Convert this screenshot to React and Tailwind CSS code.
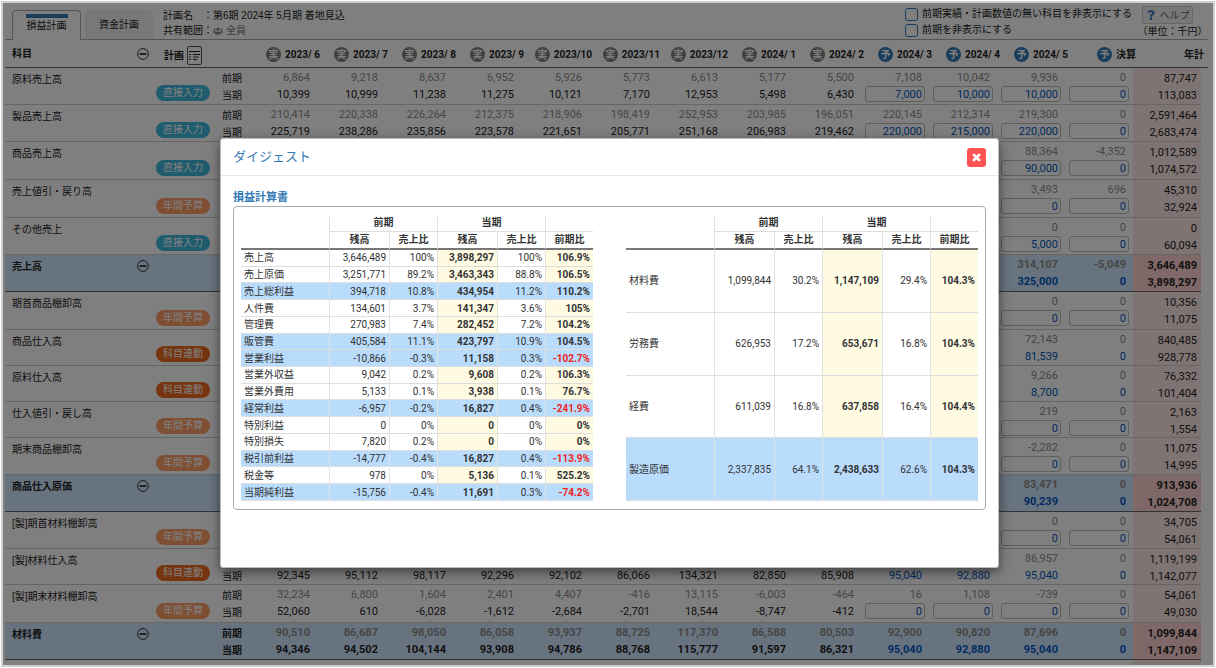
import React from "react";
import { FaUsers, FaQuestion } from "react-icons/fa";

const months = [
  ["実", "2023/ 6"],
  ["実", "2023/ 7"],
  ["実", "2023/ 8"],
  ["実", "2023/ 9"],
  ["実", "2023/10"],
  ["実", "2023/11"],
  ["実", "2023/12"],
  ["実", "2024/ 1"],
  ["実", "2024/ 2"],
  ["予", "2024/ 3"],
  ["予", "2024/ 4"],
  ["予", "2024/ 5"],
  ["予", "決算"],
];

const blank = (...tail) => [...Array(11).fill(""), ...tail];

const SHORT = "h-[36px]";
const MID = "h-[37px]";
const TALL = "h-[38px]";

const accounts = [
  {
    name: "原料売上高", kind: "direct", h: MID,
    prev: ["6,864", "9,218", "8,637", "6,952", "5,926", "5,773", "6,613", "5,177", "5,500", "7,108", "10,042", "9,936", "0"],
    cur: ["10,399", "10,999", "11,238", "11,275", "10,121", "7,170", "12,953", "5,498", "6,430", "7,000", "10,000", "10,000", "0"],
    sum: ["87,747", "113,083"],
  },
  {
    name: "製品売上高", kind: "direct", h: MID,
    prev: ["210,414", "220,338", "226,264", "212,375", "218,906", "198,419", "252,953", "203,985", "196,051", "220,145", "212,314", "219,300", "0"],
    cur: ["225,719", "238,286", "235,856", "223,578", "221,651", "205,771", "251,168", "206,983", "219,462", "220,000", "215,000", "220,000", "0"],
    sum: ["2,591,464", "2,683,474"],
  },
  { name: "商品売上高", kind: "direct", h: TALL, prev: blank("88,364", "-4,352"), cur: blank("90,000", "0"), sum: ["1,012,589", "1,074,572"] },
  { name: "売上値引・戻り高", kind: "yearly", h: TALL, prev: blank("3,493", "696"), cur: blank("0", "0"), sum: ["45,310", "32,924"] },
  { name: "その他売上", kind: "direct", h: MID, prev: blank("0", "0"), cur: blank("5,000", "0"), sum: ["0", "60,094"] },
  { name: "売上高", kind: "total", h: MID, prev: blank("314,107", "-5,049"), cur: blank("325,000", "0"), sum: ["3,646,489", "3,898,297"] },
  { name: "期首商品棚卸高", kind: "yearly", h: TALL, prev: blank("0", "0"), cur: blank("0", "0"), sum: ["10,356", "11,075"] },
  { name: "商品仕入高", kind: "linked", h: SHORT, prev: blank("72,143", "0"), cur: blank("81,539", "0"), sum: ["840,485", "928,778"] },
  { name: "原料仕入高", kind: "linked", h: SHORT, prev: blank("9,266", "0"), cur: blank("8,700", "0"), sum: ["76,332", "101,404"] },
  { name: "仕入値引・戻し高", kind: "yearly", h: SHORT, prev: blank("219", "0"), cur: blank("0", "0"), sum: ["2,163", "1,554"] },
  { name: "期末商品棚卸高", kind: "yearly", h: MID, prev: blank("-2,282", "0"), cur: blank("0", "0"), sum: ["11,075", "14,995"] },
  { name: "商品仕入原価", kind: "total", h: MID, prev: blank("83,471", "0"), cur: blank("90,239", "0"), sum: ["913,936", "1,024,708"] },
  { name: "[製]期首材料棚卸高", kind: "yearly", h: MID, prev: blank("0", "0"), cur: blank("0", "0"), sum: ["34,705", "54,061"] },
  {
    name: "[製]材料仕入高", kind: "linked", h: SHORT,
    prev: blank("86,957", "0"),
    cur: ["92,345", "95,112", "98,117", "92,296", "92,102", "86,066", "134,321", "82,850", "85,908", "95,040", "92,880", "95,040", "0"],
    sum: ["1,119,199", "1,142,077"],
  },
  {
    name: "[製]期末材料棚卸高", kind: "yearly", h: TALL,
    prev: ["32,234", "6,800", "1,604", "2,401", "4,407", "-416", "13,115", "-6,003", "-464", "16", "1,108", "-739", "0"],
    cur: ["52,060", "610", "-6,028", "-1,612", "-2,684", "-2,701", "18,544", "-8,747", "-412", "0", "0", "0", "0"],
    sum: ["54,061", "49,030"],
  },
  {
    name: "材料費", kind: "total", h: MID,
    prev: ["90,510", "86,687", "98,050", "86,058", "93,937", "88,725", "117,370", "86,588", "80,503", "92,900", "90,820", "87,696", "0"],
    cur: ["94,346", "94,502", "104,144", "93,908", "94,786", "88,768", "115,777", "91,597", "86,321", "95,040", "92,880", "95,040", "0"],
    sum: ["1,099,844", "1,147,109"],
  },
  { name: "", kind: "next", h: MID, prev: blank("", ""), cur: blank("", ""), sum: ["", ""] },
];

const badges = {
  direct: ["直接入力", "bg-[#3db8dd]"],
  yearly: ["年間予算", "bg-[#ff9e68]"],
  linked: ["科目連動", "bg-[#ec6a1c]"],
};

const profit = [
  ["売上高", "3,646,489", "100%", "3,898,297", "100%", "106.9%"],
  ["売上原価", "3,251,771", "89.2%", "3,463,343", "88.8%", "106.5%"],
  ["売上総利益", "394,718", "10.8%", "434,954", "11.2%", "110.2%", true],
  ["人件費", "134,601", "3.7%", "141,347", "3.6%", "105%"],
  ["管理費", "270,983", "7.4%", "282,452", "7.2%", "104.2%"],
  ["販管費", "405,584", "11.1%", "423,797", "10.9%", "104.5%", true],
  ["営業利益", "-10,866", "-0.3%", "11,158", "0.3%", "-102.7%", true],
  ["営業外収益", "9,042", "0.2%", "9,608", "0.2%", "106.3%"],
  ["営業外費用", "5,133", "0.1%", "3,938", "0.1%", "76.7%"],
  ["経常利益", "-6,957", "-0.2%", "16,827", "0.4%", "-241.9%", true],
  ["特別利益", "0", "0%", "0", "0%", "0%"],
  ["特別損失", "7,820", "0.2%", "0", "0%", "0%"],
  ["税引前利益", "-14,777", "-0.4%", "16,827", "0.4%", "-113.9%", true],
  ["税金等", "978", "0%", "5,136", "0.1%", "525.2%"],
  ["当期純利益", "-15,756", "-0.4%", "11,691", "0.3%", "-74.2%", true],
];

const cost = [
  ["材料費", "1,099,844", "30.2%", "1,147,109", "29.4%", "104.3%"],
  ["労務費", "626,953", "17.2%", "653,671", "16.8%", "104.3%"],
  ["経費", "611,039", "16.8%", "637,858", "16.4%", "104.4%"],
  ["製造原価", "2,337,835", "64.1%", "2,438,633", "62.6%", "104.3%", true],
];

function CollapseButton() {
  return (
    <button type="button" aria-label="折りたたむ" className="block shrink-0">
      <svg viewBox="0 0 12 12" className="size-3" fill="none" stroke="#333">
        <circle cx="6" cy="6" r="5.4" strokeWidth="1" />
        <path d="M2.6 6h6.8" strokeWidth="1.8" />
      </svg>
    </button>
  );
}

function MonthHead({ mark, label }) {
  return (
    <div className="-mr-[3px] flex items-center justify-end gap-1 whitespace-pre">
      <span
        className={
          "flex size-[15px] shrink-0 items-center justify-center rounded-full text-[10px] leading-none text-white " +
          (mark === "実" ? "bg-[#808080]" : "bg-[#337ab7]")
        }
      >
        {mark}
      </span>
      <span>{label}</span>
    </div>
  );
}

function AccountRow({ row }) {
  const total = row.kind === "total";
  const editable = row.kind === "direct" || row.kind === "yearly";
  const line = total ? "border-b border-[#666]" : "border-b border-[#ccc]";
  const tint = total ? " bg-[#cfe6ff] font-bold" : "";
  const cell = "p-0 " + line + tint;
  const badge = badges[row.kind];
  return (
    <tr className={row.h}>
      <th scope="row" className={cell + " pl-[7px] pr-1 pt-[5px] text-left align-top " + (total ? "" : "font-normal")}>
        <div className="flex items-start justify-between leading-[14px]">
          <span>{row.name}</span>
          {total && <CollapseButton />}
        </div>
      </th>
      <td className={cell + " pb-[3px] pl-[3px] align-bottom"}>
        {badge && (
          <button type="button" className={"block h-4 w-[54px] rounded-full text-center leading-4 text-white " + badge[1]}>
            {badge[0]}
          </button>
        )}
      </td>
      <td className={cell + " pl-2 pt-[2px] align-top leading-[17px]"}>
        <div className="h-[17px]">{(row.prev[0] || row.kind === "next") && "前期"}</div>
        <div className="h-4">{row.cur[0] && "当期"}</div>
      </td>
      {months.map(([, label], i) => {
        const plan = i > 8;
        return (
          <td key={label} className={cell + " pt-px text-right align-top font-[Roboto,sans-serif] text-[11px] leading-[17px]"}>
            <div className="h-[17px] pr-[7px] text-[#8c8c8c]">{row.prev[i]}</div>
            {plan && editable ? (
              <input
                type="text"
                aria-label={row.name + " " + label}
                defaultValue={row.cur[i]}
                className="mx-auto block h-4 w-[60px] rounded-[3px] border border-[#bbb] bg-transparent pr-[2px] text-right text-[#0058c0]"
              />
            ) : (
              <div className={"pr-[7px] " + (plan ? "text-[#0058c0]" : "")}>{row.cur[i]}</div>
            )}
          </td>
        );
      })}
      <td
        className={
          "p-0 pr-1 pt-[2px] text-right align-top font-[Roboto,sans-serif] text-[11px] leading-[17px] " +
          line +
          (total ? " bg-[#ffd0d0] font-bold" : " bg-[#ffe9e9]")
        }
      >
        <div>{row.sum[0]}</div>
        <div className="h-4">{row.sum[1]}</div>
      </td>
      <td className="p-0" />
    </tr>
  );
}

function DigestTable({ rows }) {
  const side = " border-l border-l-[#e2e2e2]";
  return (
    <table className="h-[286px] min-w-0 flex-1 table-fixed border-separate border-spacing-0">
      <colgroup>
        <col />
        <col className="w-[60px]" />
        <col className="w-[48px]" />
        <col className="w-[60px]" />
        <col className="w-[48px]" />
        <col className="w-[48px]" />
      </colgroup>
      <thead className="leading-4">
        <tr className="h-[17px]">
          <th className="p-0" />
          <th colSpan={2} className={"border-b border-b-[#ddd] p-0" + side}>前期</th>
          <th colSpan={2} className={"border-b border-b-[#ddd] p-0" + side}>当期</th>
          <th className={"border-b border-b-[#ddd] p-0" + side} />
        </tr>
        <tr className="h-[18px]">
          <th className="border-b-2 border-b-[#777] p-0" />
          {["残高", "売上比", "残高", "売上比", "前期比"].map((label, i) => (
            <th key={i} className={"border-b-2 border-b-[#777] p-0" + side}>{label}</th>
          ))}
        </tr>
      </thead>
      <tbody className="leading-[15px]">
        {rows.map(([name, prev, prevRate, cur, curRate, rate, total]) => {
          const base = "border-b border-b-[#ddd] py-0 ";
          const num = base + "pl-0 pr-[3px] text-right font-[Roboto,sans-serif]" + side;
          const tint = total ? " bg-[#b9dcfc]" : "";
          const strong = total ? " bg-[#b9dcfc] font-bold" : " bg-[#fffbe3] font-bold";
          return (
            <tr key={name}>
              <th scope="row" className={base + "px-[3px] text-left font-normal" + tint}>{name}</th>
              <td className={num + tint}>{prev}</td>
              <td className={num + tint}>{prevRate}</td>
              <td className={num + strong}>{cur}</td>
              <td className={num + tint}>{curRate}</td>
              <td className={num + strong + (rate.startsWith("-") ? " text-[#ee2222]" : "")}>{rate}</td>
            </tr>
          );
        })}
      </tbody>
    </table>
  );
}

function Header() {
  return (
    <header className="flex h-[37px] items-start border-b border-[#aaa] pl-[7px] pr-[5px]">
      <nav className="flex items-end gap-1 pt-[7px]">
        <a href="#pl" className="-mb-px flex h-[30px] w-[69px] flex-col items-center rounded-t-sm border border-b-0 border-[#aaa] bg-white pt-[3px]">
          <span className="h-1 w-[42px] bg-[#337ab7]" />
          <span className="leading-[15px]">損益計画</span>
        </a>
        <a href="#cash" className="flex h-[29px] w-[68px] items-center justify-center rounded-t-sm bg-[#f0f0f0]">
          資金計画
        </a>
      </nav>
      <dl className="ml-[10px] grid grid-cols-[auto_1fr] gap-x-0 pt-[5px] leading-[15px]">
        <dt className="w-10">計画名</dt>
        <dd>：第6期 2024年 5月期 着地見込</dd>
        <dt>共有範囲</dt>
        <dd className="flex items-center">
          ：<FaUsers className="mr-[3px] size-[10px] text-[#888]" />
          <span className="text-[#777]">全員</span>
        </dd>
      </dl>
      <div className="ml-auto flex gap-[10px] pt-[3px]">
        <div className="leading-4">
          {["前期実績・計画数値の無い科目を非表示にする", "前期を非表示にする"].map((label) => (
            <label key={label} className="flex items-center gap-1">
              <input type="checkbox" className="size-[13px] appearance-none rounded-[3px] border border-[#337ab7] bg-white" />
              {label}
            </label>
          ))}
        </div>
        <div className="w-[61px]">
          <button type="button" className="flex h-[18px] w-[51px] items-center justify-center gap-1 rounded-xs border border-[#ccc] bg-[#f0f0f0] text-[#666]">
            <FaQuestion className="size-[10px] text-[#337ab7]" />
            ヘルプ
          </button>
          <div className="-mx-[5px] whitespace-nowrap text-center leading-[15px]">（単位：千円）</div>
        </div>
      </div>
    </header>
  );
}

export default function App() {
  return (
    <div className="h-screen bg-white p-px font-['Liberation_Sans','Noto_Sans_CJK_JP',sans-serif] text-[10px] text-[#333]">
      <div className="relative h-full overflow-hidden border-2 border-[#d0d0d0] bg-white">
        <main className="pl-[2px] pr-[5px] text-[#222]">
          <Header />
          <table className="w-full table-fixed border-separate border-spacing-0">
            <colgroup>
              <col />
              <col className="w-[61px]" />
              <col className="w-[35px]" />
              {months.map(([, label]) => (
                <col key={label} className="w-[68px]" />
              ))}
              <col className="w-[68px]" />
              <col className="w-[7px]" />
            </colgroup>
            <thead>
              <tr className="h-[28px] [&>th]:border-b [&>th]:border-[#666]">
                <th className="py-0 pl-[7px] pr-1 text-left">
                  <div className="flex items-center justify-between">
                    科目
                    <CollapseButton />
                  </div>
                </th>
                <th colSpan={2} className="pb-0 pl-[11px] pr-0 pt-1 text-left">
                  <div className="flex items-center gap-[3px]">
                    計画
                    <button type="button" aria-label="計画一覧" className="flex h-[19px] w-[15px] items-center justify-center rounded-xs border border-[#555]">
                      <svg viewBox="0 0 11 11" className="size-[11px]" stroke="#222" strokeWidth="1.2">
                        <path d="M0 1.5h11M4 4.5h7M4 7h5.5M4 9.5h4M0 4.5h2M0 7h2M0 9.5h2" />
                      </svg>
                    </button>
                  </div>
                </th>
                {months.map(([mark, label]) => (
                  <th key={label} className="px-0 pb-0 pt-[2px] font-[Roboto,'Noto_Sans_CJK_JP',sans-serif]">
                    <MonthHead mark={mark} label={label} />
                  </th>
                ))}
                <th colSpan={2} className="pb-0 pl-0 pr-1 pt-[2px] text-right">年計</th>
              </tr>
            </thead>
            <tbody>
              {accounts.map((row, i) => (
                <AccountRow key={i} row={row} />
              ))}
            </tbody>
          </table>
        </main>

        <div className="absolute inset-0 flex items-start justify-center bg-black/50 pl-[3px] pt-[135px]">
          <section
            role="dialog"
            aria-labelledby="digest-title"
            className="flex min-h-[430px] w-[779px] max-w-full flex-col rounded-[3px] border border-[#bbb] bg-white shadow-[0_4px_12px_rgba(0,0,0,0.5)]"
          >
            <div className="flex h-[37px] items-center justify-between border-b border-[#e5e5e5] px-3">
              <h1 id="digest-title" className="text-[13px] text-[#337ab7]">ダイジェスト</h1>
              <button type="button" aria-label="閉じる" className="flex size-[19px] items-center justify-center rounded-[3px] bg-[#ff5252]">
                <svg viewBox="0 0 10 10" className="size-[9px]" stroke="#fff" strokeWidth="3">
                  <path d="M1.2 1.2l7.6 7.6M8.8 1.2L1.2 8.8" />
                </svg>
              </button>
            </div>
            <div className="px-3 pt-3">
              <h2 className="text-[11px] font-bold leading-[18px] text-[#337ab7]">損益計算書</h2>
              <div className="flex gap-[33px] rounded-[4px] border border-[#aaa] px-[7px] py-2">
                <DigestTable rows={profit} />
                <DigestTable rows={cost} />
              </div>
            </div>
          </section>
        </div>
      </div>
    </div>
  );
}
